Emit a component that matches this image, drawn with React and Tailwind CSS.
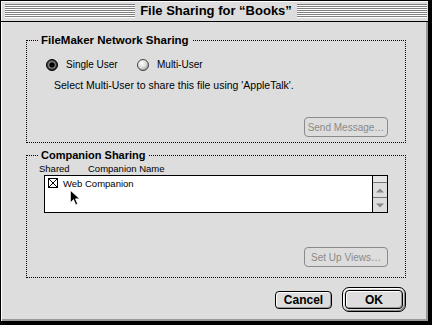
import React from "react";

function RadioOn() {
  return (
    <svg width="12" height="12" viewBox="0 0 12 12">
      <defs>
        <radialGradient id="ron" cx="0.4" cy="0.4" r="0.7">
          <stop offset="0" stopColor="#666" />
          <stop offset="1" stopColor="#222" />
        </radialGradient>
      </defs>
      <circle cx="6" cy="6" r="5.5" fill="url(#ron)" stroke="#000" strokeWidth="1" />
      <circle cx="6" cy="6" r="3.6" fill="#aaa" />
      <circle cx="6" cy="6" r="2.8" fill="#000" />
    </svg>
  );
}

function RadioOff() {
  return (
    <svg width="12" height="12" viewBox="0 0 12 12">
      <defs>
        <radialGradient id="roff" cx="0.4" cy="0.35" r="0.75">
          <stop offset="0" stopColor="#fff" />
          <stop offset="0.5" stopColor="#ddd" />
          <stop offset="1" stopColor="#888" />
        </radialGradient>
      </defs>
      <circle cx="6" cy="6" r="5.5" fill="url(#roff)" stroke="#444" strokeWidth="1" />
    </svg>
  );
}

function CheckX() {
  return (
    <svg width="10" height="10" viewBox="0 0 10 10" className="shrink-0">
      <rect x="0.5" y="0.5" width="9" height="9" fill="#fff" stroke="#000" />
      <path d="M1 1 L9 9 M9 1 L1 9" stroke="#000" strokeWidth="1" />
    </svg>
  );
}

function Cursor() {
  return (
    <svg width="11" height="16" viewBox="0 0 11 16">
      <path d="M0.5 0.5 L0.5 12.5 L3.5 9.5 L5.8 14.8 L7.6 14 L5.4 8.8 L9.5 8.8 Z" fill="#000" stroke="#fff" strokeWidth="0.6" />
    </svg>
  );
}

function Arrow({ up }) {
  return (
    <svg width="8" height="5" viewBox="0 0 8 5">
      {up ? <path d="M0 4.5 L4 0.5 L8 4.5 Z" fill="#888" /> : <path d="M0 0.5 L4 4.5 L8 0.5 Z" fill="#888" />}
    </svg>
  );
}

export default function App() {
  const stripes =
    "flex-1 h-[14px] bg-[repeating-linear-gradient(to_bottom,#808080_0px,#808080_1px,#ffffff_1px,#ffffff_2px)]";
  return (
    <div className="relative w-[432px] h-[325px] bg-black font-['Liberation_Sans',Arial,sans-serif] text-black">
      <div className="w-[428px] h-[321px] flex flex-col border-l border-t border-black">
        {/* Title bar */}
        <div className="h-[21px] shrink-0 bg-[#dddddd] border-b border-black flex items-center pl-[4px] pr-[1px] shadow-[inset_1px_1px_0_#ffffff]">
          <div className={stripes} />
          <div className="px-[5px] text-[13px] font-bold leading-[16px] whitespace-nowrap">File Sharing for “Books”</div>
          <div className={stripes} />
        </div>

        {/* Content */}
        <div className="flex-1 bg-[#dddddd] flex flex-col shadow-[inset_1px_0_0_#ffffff,inset_-2px_-2px_0_#999999]">
          {/* Group 1 */}
          <div className="relative mt-[18px] ml-[25px] w-[380px] h-[103px] shrink-0 border border-dotted border-black flex flex-col">
            <span className="absolute left-[11px] -top-[8px] px-[3px] bg-[#dddddd] text-[11.5px] font-bold leading-[14px] whitespace-nowrap">
              FileMaker Network Sharing
            </span>
            <div className="pl-[19px] pt-[17px] flex flex-col">
              <div className="flex items-center h-[14px] text-[10px] leading-[12px]">
                <div className="w-[91px] flex items-center">
                  <RadioOn />
                  <span className="ml-[8px]">Single User</span>
                </div>
                <div className="flex items-center">
                  <RadioOff />
                  <span className="ml-[8px]">Multi-User</span>
                </div>
              </div>
              <div className="ml-[8px] mt-[7px] text-[10.5px] leading-[12px] whitespace-nowrap">
                Select Multi-User to share this file using 'AppleTalk'.
              </div>
            </div>
            <div className="mt-auto self-end mr-[17px] mb-[5px] w-[84px] h-[20px] rounded-[4px] border border-[#8a8a8a] bg-[#dddddd] flex items-center justify-center text-[10px] text-[#8a8a8a]">
              Send Message…
            </div>
          </div>

          {/* Group 2 */}
          <div className="relative mt-[12px] ml-[25px] w-[380px] h-[123px] shrink-0 border border-dotted border-black flex flex-col">
            <span className="absolute left-[11px] -top-[8px] px-[3px] bg-[#dddddd] text-[11px] font-bold leading-[14px] whitespace-nowrap">
              Companion Sharing
            </span>
            <div className="pt-[7px] pl-[12px] flex text-[9.5px] leading-[11px]">
              <span className="w-[49px]">Shared</span>
              <span>Companion Name</span>
            </div>
            <div className="ml-[17px] mt-[1px] w-[344px] h-[38px] border border-black bg-white flex">
              <div className="flex-1 pl-[3px] pt-[2px]">
                <div className="flex items-center gap-[5px] h-[10px] text-[9.5px] leading-[11px]">
                  <CheckX />
                  <span>Web Companion</span>
                </div>
              </div>
              <div className="w-[15px] border-l border-black bg-[#dddddd] flex flex-col">
                <div className="h-[6px] bg-[#e6e6e6]" />
                <div className="h-[15px] border-t border-[#777777] flex items-center justify-center">
                  <Arrow up />
                </div>
                <div className="h-[15px] border-t border-[#777777] flex items-center justify-center">
                  <Arrow />
                </div>
              </div>
            </div>
            <div className="mt-auto self-end mr-[17px] mb-[10px] w-[84px] h-[20px] rounded-[4px] border border-[#8a8a8a] bg-[#dddddd] flex items-center justify-center text-[10px] text-[#8a8a8a]">
              Set Up Views…
            </div>
          </div>

          {/* Buttons */}
          <div className="mt-[9px] mr-[22px] flex justify-end items-center">
            <div className="mr-[10px] w-[57px] h-[18px] rounded-[4px] border border-black bg-[#dddddd] shadow-[inset_1px_1px_0_#ffffff,inset_-1px_-1px_0_#999999] flex items-center justify-center text-[12px] font-bold leading-[14px]">
              Cancel
            </div>
            <div className="w-[64px] h-[25px] rounded-[7px] border border-black bg-[#dddddd] p-[2px] shadow-[inset_1px_1px_0_#ffffff,inset_-1px_-1px_0_#888888]">
              <div className="w-full h-full rounded-[4px] border border-black bg-[#dddddd] shadow-[inset_1px_1px_0_#ffffff,inset_-1px_-1px_0_#999999] flex items-center justify-center text-[12px] font-bold leading-[14px]">
                OK
              </div>
            </div>
          </div>
        </div>
      </div>

      <div className="absolute left-[70px] top-[190px]">
        <Cursor />
      </div>
    </div>
  );
}
